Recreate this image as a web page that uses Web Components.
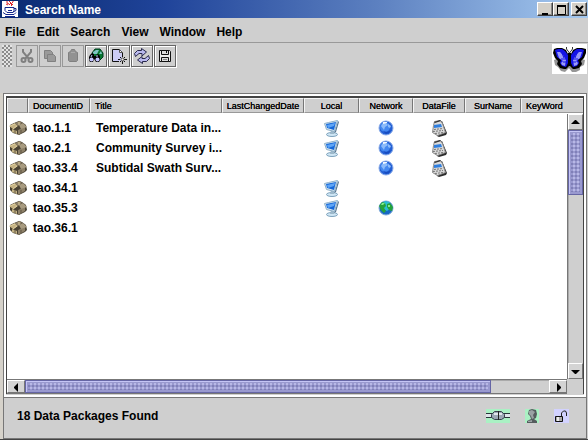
<!DOCTYPE html>
<html lang="en">
<head>
<meta charset="utf-8">
<title>Search Name</title>
<style>
html,body{margin:0;height:100%}
body{background:#cfcfcf;font:bold 12px/16px "Liberation Sans",Arial,sans-serif;color:#000}
</style>
</head>
<body>
<app-window>
  <title-bar slot="title">Search Name</title-bar>
  <menu-bar slot="menu"></menu-bar>
  <tool-bar slot="tools"></tool-bar>
  <package-list slot="content"></package-list>
  <status-bar slot="status">18 Data Packages Found</status-bar>
</app-window>
<script>
const ICONS = {
cup:['0 0 16 16',`<path fill="#fff" d="M0 0h16v16H0z"/><path d="M5 0v2l2 1M7 0l2 2-2 2M11 0v1l-2 2 1 1M4 3l2 1M11 3l-2 2" fill="none" stroke="#e0262c"/><path d="M3 6.500h9v3l-1 2H5l-2-2zM12 7.500h2v2l-3 1.500M1 11.500l3 2h8l2-2M3 15.500h10M6 9.500h4" fill="none" stroke="#15278c"/>`],
cut:['0 0 16 16',`<g fill="none" stroke="#808080" stroke-width="2"><path d="M4 1v3l6 7M12 1v3L6 11"/><circle cx="4.500" cy="12" r="2"/><circle cx="11.500" cy="12" r="2"/></g>`],
copy:['0 0 16 16',`<g fill="#9a9a9a" stroke="#808080"><path d="M2.500 2.500h6l2 2v6h-8z"/><path d="M5.500 6.500h6l2 2v5h-8z"/></g>`],
paste:['0 0 16 16',`<path fill="#929292" stroke="#808080" d="M3.500 4.500l2-1 1-2h3l1 2 2 1v8l-1 1h-7l-1-1z"/><path stroke="#ababab" d="M6 4.500h4"/>`],
find:['0 0 16 16',`<path fill="#087830" stroke="#003b20" d="M4 5l3-4h5l3 4v4l-3 3-5-2z"/><path fill="#7fc4c4" d="M5 4l3-2h3L9 6H5zM11 6l2-3 1 3z"/><path d="M2 7l2-2 2 1v2h2V7l2-1 2 2v4l-1 2H8l-2-3-1 3H2l-1-2V9z"/><circle cx="3.500" cy="11.500" r="2" fill="#c5c5ff"/><circle cx="9.500" cy="11.500" r="2" fill="#c5c5ff"/><path stroke="#bcf" d="M4 7l-1 2M9 7v2"/>`],
fresh:['0 0 16 16',`<path fill="#ccccf4" d="M2 2h9v11H2z"/><path fill="none" stroke="#111" d="M8 13.500H1.500v-12h7l3 3v3"/><path fill="#fff" stroke="#555" d="M8.500 1.500l3 3h-3z"/><path stroke="#111" d="M11.500 7v2M11.500 12v4M7 11.500h2M13 11.500h3M9 9l1 1M13 13l1 1M14 9l-1 1M10 13l-1 1"/><circle cx="11.500" cy="11.500" r="1.500" fill="#eee" stroke="#444"/>`],
refresh:['0 0 16 16',`<g fill="#b9b9ee" stroke="#29294c"><path d="M1.500 8.500l-1-3 3-3h4v-2l5 3.500L8 8V5.500H5z"/><path d="M14.500 7.500l1 3-3 3h-4v2L3.500 12 8 8.500v2h3z"/></g>`],
save:['0 0 16 16',`<path fill="#eee" stroke="#111" d="M2.500 2.500h10l1 1v10h-11z"/><path fill="#ddd" stroke="#111" d="M4.500 2.500h7v4h-7zM4.500 9.500h7v4h-7z"/><path fill="#111" d="M9 3h1v2H9z"/><path stroke="#888" d="M6 11.500h4"/>`],
butterfly:['0 0 35 30',`<path fill="#fff" d="M0 0h35v30H0z"/><path fill="#969696" d="M2 16l5-2 8 8 3-1 8-7 7 2-1 5-4 2v3l-4 2h-4l-3-4-4 4-4-1-3-4-3-2z"/><path fill="none" stroke="#333" d="M14.500 3v2l3 4M20.500 3v2l-3 4"/><path d="M2 5l3-1h5l4 2 2 4h3l2-4 4-2h5l4 1v4l-2 5-3 3 1 3-3 4-4 1h-2l-3-3h-1l-3 3h-2l-4-1-3-4 1-3-3-3-2-5z"/><path fill="#1414e6" d="M3 6l3-1h4l3 2 3 4v8l-2 4-4-1-2-3 1-3-4-3zM32 6l-3-1h-4l-3 2-3 4v8l2 4 4-1 2-3-1-3 4-3z"/><path fill="#9a9af8" d="M5 8h3l3 3 3 5-1 6-3-1-1-2 2-2-4-3zM30 8h-3l-3 3-3 5 1 6 3-1 1-2-2-2 4-3z"/><path fill="none" stroke="#1414e6" d="M10 9l2 5M9 15h5M11 18h3M25 9l-2 5M26 15h-5M24 18h-3"/><path d="M16 9h3v13h-3z"/>`],
box:['0 0 18 14',`<path fill="#4a4233" d="M1 4l4-2 5-2 3 1 4 3 1 5-2 2-6 3-6-2-3-3z"/><path fill="#c4b283" d="M0 5l6-3 3 3-5 3zM3 8l5 2v3l-5-2z"/><path fill="#8d8068" d="M6 2l5-2 2 2-4 3zM9 9l7-3v4l-7 4z"/><path fill="#a89b80" d="M10 4l4-2 4 4-6 2z"/><path stroke="#e0cf9f" fill="none" d="M1 5l5-2M10 1v3M4 8l4-3"/><path stroke="#5e5442" d="M12 9v3M6 9v3"/>`],
monitor:['0 0 17 17',`<ellipse cx="9" cy="14.500" rx="5.500" ry="2" fill="#cfe6f4" stroke="#7fa3bd"/><path fill="#9cb8ca" d="M8 10h4l-1 4H7z"/><path fill="#5c7890" d="M15 1l1 1-3 10-2 1 1-2z"/><path fill="#d9e8f2" stroke="#8fb0c8" d="M1.500 3.500l4-1 9-2-3 11-8-2z"/><path fill="#1668d8" d="M3 4l10-2-2 8-7-2z"/><path fill="#5fa5f5" d="M4 5l8-2-1 3-6 2z"/>`],
globe:['0 0 16 16',`<circle cx="8" cy="8" r="7" fill="#2460d4" stroke="#86a9e9"/><circle cx="7" cy="7" r="5" fill="#4488f0"/><path fill="#8dbcfa" d="M3 6l2-3h3l2 2-3 2-1 3zM10 4l3 2-1 2-2-1z"/><path fill="#184cc0" d="M5 11l4 1 4-2-2 3-3 1z"/><path fill="#f2f9ff" d="M5 2h4v1L5 4z"/>`],
earth:['0 0 16 16',`<circle cx="8" cy="8" r="7" fill="#1668c4" stroke="#80abd9"/><path fill="#29bdd3" d="M3 4l4-3 4 1 3 5-5 4-4-2z"/><path fill="#24a33b" d="M1 6l3-4 3 1 1 3-2 2 2 3-2 2-3-3zM9 4l3-1 3 4-1 4-3-1-2-3z"/><path fill="#80ec90" d="M4 3h3L5 5H3zM10 5h2v2h-2z"/>`],
calc:['0 0 16 17',`<path fill="#2c2c2c" d="M3 2l8-1 5 12-1 2-7 2-2-1z"/><path fill="#d9d9d9" stroke="#888" d="M3.500 1.500l6-1 2 3 3 9-8 3-5-3 1-7z"/><path fill="#333" d="M3 2l6-2 1 1-6 2z"/><path fill="#2f7fe0" d="M3 5l7-1 1 3-8 1z"/><path stroke="#777" stroke-dasharray="2 1" d="M3 9.500l9-1M2 11.500l10-1M4 13.500l8-1"/>`],
plug:['0 0 24 14',`<path fill="#aaf1c4" d="M0 0h24v14H0z"/><path fill="#dfe5ea" d="M0 5h24v4H0z"/><path stroke="#28343a" d="M0 4.500h24M0 8.500h24"/><path fill="#9ca7b5" stroke="#36424c" d="M5.500 5.500l3-3h7l3 3v3l-3 2h-7l-3-2z"/><path fill="#e2e6ec" d="M8 4h8v2H8z"/><path stroke="#222" d="M12.500 2v9"/>`],
person:['0 0 14 14',`<path fill="#aaf1c4" d="M0 0h14v14H0z"/><path fill="#555c5e" d="M4 1l3-1 4 1 1 4-1 4-2 1 3 2v2H2v-2l4-2-1-3-2-2z"/><path fill="#9aa2a4" d="M4 2l3-1 3 2-2 3 1 3-2 1-1-3-2-2zM3 12l4-1v2H3z"/>`],
lock:['0 0 15 14',`<path fill="#d2d2ff" d="M0 0h15v14H0z"/><path fill="#aaa" stroke="#111" d="M1.500 7.500h7v5h-7z"/><path fill="#eee" d="M3 8h2v4H3z"/><path fill="none" stroke="#222" d="M7.500 7V4l2-2h2l1 2v3"/>`],
min:['0 0 13 11','<path d="M3 9h6v2H3z"/>'],
max:['0 0 13 11','<path fill="none" stroke="#000" d="M2.500 1.500h8v9h-8z"/><path d="M2 1h9v2H2z"/>'],
close:['0 0 13 11','<path fill="none" stroke="#000" stroke-width="2" d="M3 2l7 7M10 2L3 9"/>'],
up:['0 0 13 13','<path d="M2 8h9L7 4H6z"/>'],
down:['0 0 13 13','<path d="M2 5h9L7 9H6z"/>'],
left:['0 0 13 13','<path d="M8 2v9L4 7V6z"/>'],
right:['0 0 13 13','<path d="M5 2v9l4-4V6z"/>']
};
function define(name, html, setup){
  const t = document.createElement('template');
  t.innerHTML = html;
  customElements.define(name, class extends HTMLElement{
    connectedCallback(){
      if(this.shadowRoot) return;
      this.attachShadow({mode:'open'}).append(t.content.cloneNode(true));
      if(setup) setup(this, this.shadowRoot);
    }
  });
}
define('ui-icon','<style>:host{display:inline-block;line-height:0;vertical-align:middle}svg{display:block}</style><svg aria-hidden="true"></svg>',(h,r)=>{
  const [box,body]=ICONS[h.getAttribute('name')], s=r.querySelector('svg'), [, , w, ht]=box.split(' ');
  s.setAttribute('viewBox',box); s.setAttribute('width',w); s.setAttribute('height',ht); s.innerHTML=body;
});
define('app-window',`<style>
:host{display:flex;flex-direction:column;min-height:100vh;background:#cfcfcf}
.body{flex:1;display:flex;flex-direction:column;margin-top:15px;padding:0 1px 0 3px;background:linear-gradient(90deg,#d6d2ca 3px,#cfcfcf 3px);border-bottom:1px solid #444}
slot[name=content]{display:contents}
</style><slot name="title"></slot><slot name="menu"></slot><slot name="tools"></slot><div class="body"><slot name="content"></slot><slot name="status"></slot></div>`);
define('title-bar',`<style>
:host{display:flex;align-items:center;height:18px;padding:0 1px 0 2px;color:#fff;background:linear-gradient(90deg,#0a2a70,#20449a 28%,#5c80c0 64%,#a6caf0)}
.name{flex:1;margin-left:7px;line-height:18px;padding-top:2px}
.controls{display:flex}
button{display:grid;place-items:center;width:16px;height:14px;padding:0;background:#d4d0c8;border:1px solid;border-color:#fff #404040 #404040 #fff;box-shadow:inset -1px -1px #888}
button:last-child{margin-left:2px}
</style><ui-icon name="cup"></ui-icon><span class="name"><slot></slot></span><div class="controls"><button aria-label="Minimize"><ui-icon name="min"></ui-icon></button><button aria-label="Maximize"><ui-icon name="max"></ui-icon></button><button aria-label="Close"><ui-icon name="close"></ui-icon></button></div>`);
define('menu-bar',`<style>
:host{display:block;border-bottom:1px solid #999}
nav{display:flex;gap:11px;padding:6px 5px 2px}
button{font:inherit;color:inherit;background:none;border:0;padding:0}
</style><nav><button>File</button><button>Edit</button><button>Search</button><button>View</button><button>Window</button><button>Help</button></nav>`);
define('tool-button',`<style>
:host{display:block}
button{display:grid;place-items:center;width:22px;height:22px;padding:0;background:#cfcfcf;border:1px solid #666;box-shadow:inset 1px 1px #fff,1px 1px #fff}
button:disabled{border-color:#999;box-shadow:none}
</style><button></button>`,(h,r)=>{
  const b=r.querySelector('button'), i=document.createElement('ui-icon');
  i.setAttribute('name',h.getAttribute('icon')); b.append(i);
  b.disabled=h.hasAttribute('off'); b.setAttribute('aria-label',h.getAttribute('label'));
});
define('tool-bar',`<style>
:host{display:flex;align-items:flex-start;padding:2px 1px 4px 2px}
.grip{width:10px;height:22px;margin-right:4px;background:conic-gradient(#8c8c8c 25%,transparent 0) 0 0/4px 4px,conic-gradient(#8c8c8c 25%,transparent 0) 2px 2px/4px 4px,#e4e4e4}
.tools{display:flex;gap:1px;flex:1}
.logo{margin-top:-1px}
</style><div class="grip"></div><div class="tools">
<tool-button icon="cut" label="Cut" off></tool-button><tool-button icon="copy" label="Copy" off></tool-button><tool-button icon="paste" label="Paste" off></tool-button><tool-button icon="find" label="Search"></tool-button><tool-button icon="fresh" label="New"></tool-button><tool-button icon="refresh" label="Refresh"></tool-button><tool-button icon="save" label="Save"></tool-button></div><ui-icon class="logo" name="butterfly"></ui-icon>`);
define('scroll-bar',`<style>
:host{display:flex;background:#cfcfcf;box-sizing:border-box;border:solid #777;border-width:0 0 0 1px}
:host([vertical]){flex-direction:column;width:16px}
:host(:not([vertical])){height:15px;border-width:1px 0}
button{flex:none;display:grid;place-items:center;padding:0;background:#d4d4d4;border:1px solid;border-color:#fff #777 #777 #fff}
:host([vertical]) button{height:16px;width:15px}
:host(:not([vertical])) button{width:18px;height:13px}
.track{flex:1;display:flex;box-shadow:inset 1px 1px #aaa}
:host([vertical]) .track{flex-direction:column}
.thumb{box-sizing:border-box;border:1px solid #6666a5;box-shadow:inset 1px 1px #c5c5f5;padding:2px;background:#9999cf}
.thumb::before{content:"";display:block;height:100%;background:conic-gradient(#b8b8e6 25%,transparent 0 50%,#8080b8 0 75%,transparent 0) 0 0/4px 4px}
</style><button class="a"></button><div class="track"><div class="thumb"></div></div><button class="b"></button>`,(h,r)=>{
  const v=h.hasAttribute('vertical');
  [['.a',v?'up':'left'],['.b',v?'down':'right']].forEach(([q,n])=>{
    const i=document.createElement('ui-icon');i.setAttribute('name',n);
    r.querySelector(q).append(i);r.querySelector(q).setAttribute('aria-label','Scroll '+n);
  });
  r.querySelector('.thumb').style.flex='0 0 '+h.getAttribute('size');
});
define('package-list',`<style>
:host{flex:1;display:flex;border:1px solid #777;border-bottom:0;background:#fff;padding:2px 2px 3px 2px}
.frame{flex:1;display:grid;grid-template:16px 1fr auto/1fr 16px;border:1px solid #444;border-top-width:2px;border-bottom:0;background:#fff;box-shadow:0 1px #cfcfcf}
.data{grid-area:1/1/3/3;min-width:0}
table{width:100%;table-layout:fixed;border-collapse:separate;border-spacing:0}
th{box-sizing:border-box;height:15px;padding:0;background:#cfcfcf;border:1px solid;border-color:#f4f4f4 #777 #999 #f4f4f4;font:9px/12px "Liberation Sans",Arial,sans-serif;text-shadow:0 0 #000;white-space:nowrap;text-align:center}
th.l{text-align:left;padding-left:4px}
th:last-child{border-right:0}
tbody::before{content:"";display:block;height:5px}
td{height:20px;padding:0;line-height:20px;white-space:nowrap;text-align:center}
td:nth-child(1){text-align:left;padding-left:2px}
td:nth-child(2){text-align:left;padding-left:5px}
td:nth-child(3){text-align:left;padding-left:6px}
td ui-icon{display:block;width:max-content;margin:auto}
td:nth-child(1) ui-icon{margin:0}
.v{grid-area:2/2}.h{grid-area:3/1}.corner{grid-area:3/2;background:#cfcfcf}
</style><div class="frame"><div class="data"><table>
<colgroup><col style="width:21px"><col style="width:62px"><col style="width:132px"><col style="width:82px"><col style="width:55px"><col style="width:54px"><col style="width:52px"><col style="width:56px"><col></colgroup>
<thead><tr><th></th><th class="l">DocumentID</th><th class="l">Title</th><th>LastChangedDate</th><th>Local</th><th>Network</th><th>DataFile</th><th>SurName</th><th class="l">KeyWord</th></tr></thead><tbody></tbody></table></div>
<scroll-bar class="v" vertical size="28%"></scroll-bar><scroll-bar class="h" size="89%"></scroll-bar><div class="corner"></div></div>`,(h,r)=>{
  const ic=n=>n?`<ui-icon name="${n}"></ui-icon>`:'';
  r.querySelector('tbody').innerHTML=[
    ['tao.1.1','Temperature Data in...','monitor','globe','calc'],
    ['tao.2.1','Community Survey i...','monitor','globe','calc'],
    ['tao.33.4','Subtidal Swath Surv...','','globe','calc'],
    ['tao.34.1','','monitor','',''],
    ['tao.35.3','','monitor','earth',''],
    ['tao.36.1','','','','']
  ].map(x=>`<tr><td>${ic('box')}</td><td>${x[0]}</td><td>${x[1]}</td><td></td><td>${ic(x[2])}</td><td>${ic(x[3])}</td><td>${ic(x[4])}</td><td></td><td></td></tr>`).join('');
});
define('status-bar',`<style>
:host{display:flex;align-items:center;gap:15px;height:42px;box-sizing:border-box;padding:0 17px 4px 13px;border:1px solid #777}
span{flex:1}
</style><span><slot></slot></span><ui-icon name="plug"></ui-icon><ui-icon name="person"></ui-icon><ui-icon name="lock"></ui-icon>`);
</script>
</body>
</html>
